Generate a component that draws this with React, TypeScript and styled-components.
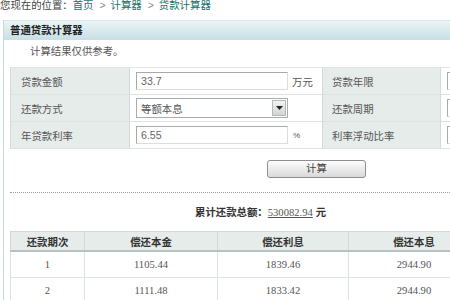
import styled, { createGlobalStyle } from "styled-components";

const GlobalStyle = createGlobalStyle`
  html, body {
    margin: 0;
    padding: 0;
    overflow: hidden;
    background: #ffffff;
  }
  body {
    font-family: "Liberation Sans", "Noto Sans CJK SC", sans-serif;
    font-size: 10.4px;
    color: #555;
  }
`;

const rows = [
  { period: "1", principal: "1105.44", interest: "1839.46", total: "2944.90" },
  { period: "2", principal: "1111.48", interest: "1833.42", total: "2944.90" },
];

function App() {
  return (
    <Page>
      <GlobalStyle />
      <Breadcrumb>
        您现在的位置：<Crumb>首页</Crumb>
        <Sep>&gt;</Sep>
        <Crumb>计算器</Crumb>
        <Sep>&gt;</Sep>
        <Crumb>贷款计算器</Crumb>
      </Breadcrumb>

      <Panel>
        <PanelHeader>普通贷款计算器</PanelHeader>
        <Note>计算结果仅供参考。</Note>

        <FormTable>
          <colgroup>
            <col style={{ width: 119 }} />
            <col style={{ width: 193 }} />
            <col style={{ width: 118 }} />
            <col />
          </colgroup>
          <tbody>
            <FormRow>
              <LabelCell>贷款金额</LabelCell>
              <FieldCell>
                <TextBox>33.7</TextBox>
                <Unit>万元</Unit>
              </FieldCell>
              <LabelCell $second>贷款年限</LabelCell>
              <FieldCell>
                <TextBox $narrow />
              </FieldCell>
            </FormRow>
            <FormRow>
              <LabelCell>还款方式</LabelCell>
              <FieldCell>
                <SelectBox>
                  等额本息
                  <SelectArrow>
                    <svg width="7" height="4" viewBox="0 0 7 4">
                      <path d="M0 0h7L3.5 4z" fill="#222" />
                    </svg>
                  </SelectArrow>
                </SelectBox>
              </FieldCell>
              <LabelCell $second>还款周期</LabelCell>
              <FieldCell>
                <TextBox $narrow />
              </FieldCell>
            </FormRow>
            <FormRow>
              <LabelCell>年贷款利率</LabelCell>
              <FieldCell>
                <TextBox>6.55</TextBox>
                <Unit $small>%</Unit>
              </FieldCell>
              <LabelCell $second>利率浮动比率</LabelCell>
              <FieldCell>
                <TextBox $narrow />
              </FieldCell>
            </FormRow>
          </tbody>
        </FormTable>

        <ButtonRow>
          <CalcButton type="button">计算</CalcButton>
        </ButtonRow>

        <Divider />

        <Total>
          <strong>累计还款总额：</strong>
          <TotalValue>530082.94</TotalValue> <strong>元</strong>
        </Total>

        <ResultTable>
          <colgroup>
            <col style={{ width: 74 }} />
            <col style={{ width: 133 }} />
            <col style={{ width: 131 }} />
            <col style={{ width: 131 }} />
          </colgroup>
          <thead>
            <tr>
              <HeadCell>还款期次</HeadCell>
              <HeadCell>偿还本金</HeadCell>
              <HeadCell>偿还利息</HeadCell>
              <HeadCell>偿还本息</HeadCell>
            </tr>
          </thead>
          <tbody>
            {rows.map((r) => (
              <tr key={r.period}>
                <NumCell>{r.period}</NumCell>
                <NumCell>{r.principal}</NumCell>
                <NumCell>{r.interest}</NumCell>
                <NumCell>{r.total}</NumCell>
              </tr>
            ))}
          </tbody>
        </ResultTable>
      </Panel>
    </Page>
  );
}

export default App;

const Page = styled.div`
  width: 700px;
  height: 300px;
`;

const Breadcrumb = styled.div`
  height: 20px;
  line-height: 12px;
  color: #444;
  white-space: nowrap;
`;

const Crumb = styled.span`
  color: #23706a;
`;

const Sep = styled.span`
  color: #888;
  margin: 0 5px 0 6px;
`;

const Panel = styled.div`
  margin-left: 3px;
  border-left: 1px solid #c6dbe0;
  height: 280px;
`;

const PanelHeader = styled.div`
  height: 19px;
  line-height: 19px;
  padding-left: 6px;
  border-top: 1px solid #d8e8ec;
  background: linear-gradient(#eaf4f6, #c7dfe5);
  font-weight: bold;
  color: #222;
`;

const Note = styled.div`
  line-height: 12px;
  padding: 6px 0 9px 26px;
  color: #555;
`;

const FormTable = styled.table`
  margin-left: 6px;
  border-collapse: collapse;
  width: 620px;
  table-layout: fixed;
  border-top: 1px solid #dfe5e3;
  border-bottom: 1px solid #d4dad8;
`;

const FormRow = styled.tr`
  height: 27px;
  border-bottom: 1px solid #dde3e1;
`;

const LabelCell = styled.td<{ $second?: boolean }>`
  padding: 0 0 0 ${(p) => (p.$second ? "9px" : "10px")};
  background: #e6ecea;
  border-left: 1px solid #d4dad8;
  border-right: 1px solid #d4dad8;
  color: #555;
  white-space: nowrap;
  overflow: hidden;
`;

const FieldCell = styled.td`
  padding: 0 0 0 6px;
  white-space: nowrap;
  overflow: hidden;
`;

const TextBox = styled.span<{ $narrow?: boolean }>`
  display: inline-flex;
  align-items: center;
  box-sizing: border-box;
  width: ${(p) => (p.$narrow ? "120px" : "152px")};
  height: 18px;
  padding-left: 4px;
  vertical-align: middle;
  border: 1px solid #a9a9a9;
  border-right-color: #dcdcdc;
  border-bottom-color: #dcdcdc;
  background: #fff;
  color: #666;
  font-size: 10.6px;
`;

const Unit = styled.span<{ $small?: boolean }>`
  margin-left: ${(p) => (p.$small ? "5px" : "4px")};
  vertical-align: middle;
  color: #555;
  font-size: ${(p) => (p.$small ? "8px" : "10.4px")};
`;

const SelectBox = styled.span`
  display: inline-flex;
  align-items: center;
  justify-content: space-between;
  box-sizing: border-box;
  width: 152px;
  height: 20px;
  padding: 0 1px 0 4px;
  vertical-align: middle;
  border: 1px solid #a5acb5;
  background: #fff;
  color: #555;
`;

const SelectArrow = styled.span`
  display: flex;
  align-items: center;
  justify-content: center;
  box-sizing: border-box;
  width: 14px;
  height: 16px;
  border: 1px solid #b7b7b7;
  background: linear-gradient(#f2f2f2, #d4d4d4);
`;

const ButtonRow = styled.div`
  padding: 11px 0 0 263px;
`;

const CalcButton = styled.button`
  display: block;
  width: 99px;
  height: 18px;
  padding: 0;
  border: 1px solid #8e8e8e;
  border-radius: 3px;
  background: linear-gradient(#fdfdfd, #d9d9d9);
  font-family: inherit;
  font-size: 10.4px;
  line-height: 14px;
  color: #444;
`;

const Divider = styled.div`
  margin: 14px 0 0 6px;
  border-top: 1px dotted #9a9a9a;
`;

const Total = styled.div`
  padding: 14px 0 12px 191px;
  line-height: 12px;
  color: #333;
  strong {
    color: #333;
  }
`;

const TotalValue = styled.span`
  font-family: "Liberation Serif", serif;
  font-size: 10.6px;
  color: #555;
  text-decoration: underline;
`;

const ResultTable = styled.table`
  margin-left: 6px;
  border-collapse: collapse;
  table-layout: fixed;
  width: 469px;
`;

const HeadCell = styled.th`
  height: 18px;
  padding: 0;
  background: #e6ecea;
  border: 1px solid #d2d8d6;
  border-bottom: 2px solid #b9c0be;
  color: #333;
  font-weight: bold;
  text-align: center;
`;

const NumCell = styled.td`
  height: 25px;
  padding: 0;
  border: 1px solid #dde3e1;
  text-align: center;
  font-family: "Liberation Serif", serif;
  font-size: 10.6px;
  color: #555;
`;
